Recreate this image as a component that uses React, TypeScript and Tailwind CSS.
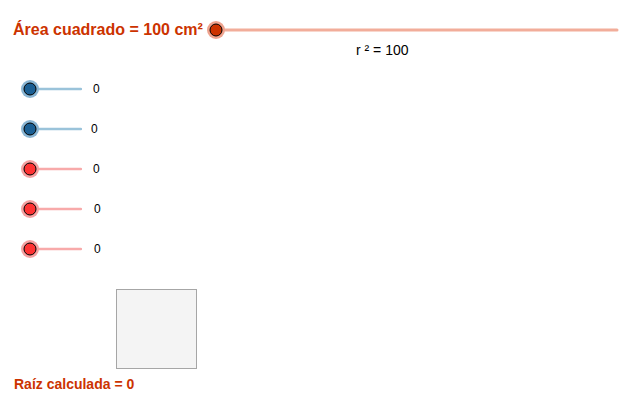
const ORANGE = "#cc3300";

function Knob({ cx, cy, fill, halo, r = 6 }: { cx: number; cy: number; fill: string; halo: string; r?: number }) {
  return (
    <>
      <circle cx={cx} cy={cy} r={r + 3} fill={halo} />
      <circle cx={cx} cy={cy} r={r} fill={fill} stroke="#000" strokeWidth={1} />
    </>
  );
}

function SmallSlider({ blue, label, gap }: { blue: boolean; label: string; gap: string }) {
  const line = blue ? "#9ac3da" : "#f8aaaa";
  const fill = blue ? "#1a5f94" : "#ff3333";
  const halo = blue ? "#8ab6d4" : "#f6a2a2";
  return (
    <div className="flex h-[20px] items-center">
      <svg width="64" height="20" className="ml-[18px]">
        <line x1="12" y1="10" x2="63" y2="10" stroke={line} strokeWidth="2.5" strokeLinecap="round" />
        <Knob cx={12} cy={10} fill={fill} halo={halo} />
      </svg>
      <span className={`${gap} text-[12px] text-black`}>{label}</span>
    </div>
  );
}

export default function App() {
  const rows = [
    { blue: true, gap: "ml-[11px]" },
    { blue: true, gap: "ml-[9px]" },
    { blue: false, gap: "ml-[11px]" },
    { blue: false, gap: "ml-[12px]" },
    { blue: false, gap: "ml-[12px]" },
  ];

  return (
    <div
      className="relative h-[400px] w-[626px] overflow-hidden bg-white"
      style={{ fontFamily: '"Liberation Sans", Arial, sans-serif' }}
    >
      <div className="mt-[20px] flex h-[20px] items-center">
        <span className="ml-[13px] text-[16px] font-bold leading-none" style={{ color: ORANGE }}>
          Área cuadrado = 100 cm²
        </span>
        <svg width="414" height="20" className="ml-[3px]">
          <line x1="10" y1="10" x2="411" y2="10" stroke="#f2ad9a" strokeWidth="3" strokeLinecap="round" />
          <Knob cx={10} cy={10} fill={ORANGE} halo="#efa38e" />
        </svg>
      </div>

      <div className="mt-[3px] ml-[356px] text-[14px] leading-none text-black">r ² = 100</div>

      <div className="mt-[22px] flex flex-col gap-[20px]">
        {rows.map((r, i) => (
          <SmallSlider key={i} blue={r.blue} label="0" gap={r.gap} />
        ))}
      </div>

      <div className="ml-[116px] mt-[30px] h-[80px] w-[81px] border border-[#a6a6a6] bg-[#f4f4f4]" />

      <div className="ml-[14px] mt-[8px] text-[14px] font-bold leading-none" style={{ color: ORANGE }}>
        Raíz calculada = 0
      </div>
    </div>
  );
}
